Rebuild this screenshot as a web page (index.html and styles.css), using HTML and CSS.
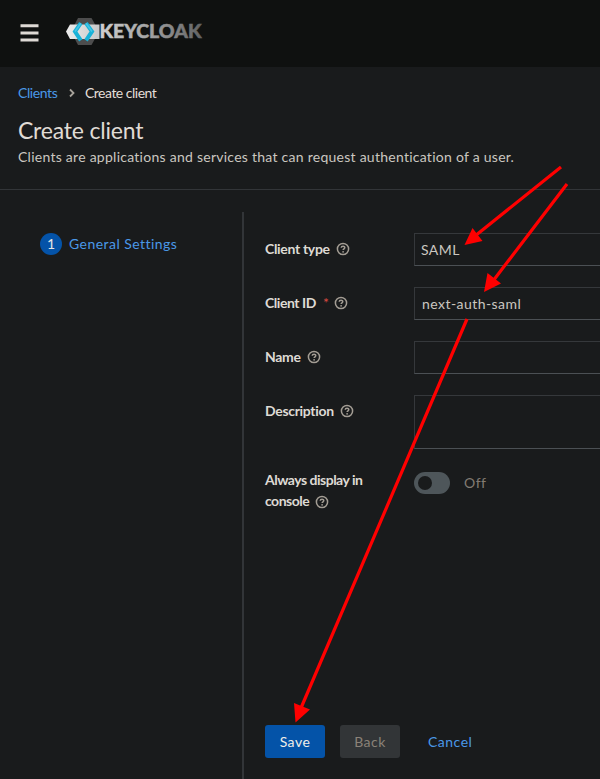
FILE: index.html
```
<!DOCTYPE html>
<html lang="en">
<head>
<meta charset="utf-8">
<title>Create client</title>
<link rel="stylesheet" href="styles.css">
</head>
<body>
<svg class="defs" width="0" height="0" aria-hidden="true">
  <symbol id="help" viewBox="0 0 14 14">
    <circle cx="7" cy="7" r="5.6" fill="none" stroke="currentColor" stroke-width="1.5"/>
    <path d="M5.200 5.700c.1-2 3.700-1.900 3.600-.1C8.800 6.800 7.100 6.800 7.100 8.100" fill="none" stroke="currentColor" stroke-width="1.500"/>
    <circle cx="7.100" cy="9.800" r=".9" fill="currentColor"/>
  </symbol>
</svg>
<header class="masthead">
  <svg class="menu" width="19" height="19" viewBox="0 0 19 19"><path d="M.5 1.800h18M.5 9h18M.5 16h18" stroke="#dedad5" stroke-width="3" stroke-linecap="butt"/></svg>
  <svg class="brand" width="140" height="30" viewBox="0 0 140 30">
    <defs>
      <linearGradient id="word" gradientUnits="userSpaceOnUse" x1="34" x2="137" y1="0" y2="0"><stop offset="0" stop-color="#d0d0d0"/><stop offset=".5" stop-color="#a0a0a0"/><stop offset="1" stop-color="#606161"/></linearGradient>
      <linearGradient id="band" x1="0" x2="1" y1="0" y2="0"><stop offset="0" stop-color="#ededed"/><stop offset="1" stop-color="#c8c8c8"/></linearGradient>
    </defs>
    <path d="M12 1h13.500L33 14.500 25.500 28H12L5 14.500z" fill="#4d4d4d"/>
    <path d="M4 7.500H33.500V22H4L0 14.500z" fill="url(#band)"/>
    <path d="M14.800 6.200 9 14.500l5.800 8.800" fill="none" stroke="#19b2d8" stroke-width="4"/>
    <path d="M20 6.200l6 8.300-6 8.800" fill="none" stroke="#19b2d8" stroke-width="4"/>
    <path d="M14.800 6.200 9 14.500M20 6.200l6 8.300" fill="none" stroke="#46c6e5" stroke-width="1.600"/>
    <text class="wordmark" x="33.500" y="21.300" textLength="102" lengthAdjust="spacingAndGlyphs" fill="url(#word)" stroke="url(#word)" stroke-width=".5">KEYCLOAK</text>
  </svg>
</header>
<section class="page-head">
  <nav class="crumbs"><a class="crumb-link">Clients</a><svg width="6" height="10" viewBox="0 0 6 10"><path d="m1 1.500 3.500 3.500L1 8.500" fill="none" stroke="#a8a39b" stroke-width="1.800"/></svg><span class="crumb-here">Create client</span></nav>
  <h1>Create client</h1>
  <p class="lead">Clients are applications and services that can request authentication of a user.</p>
</section>
<main class="wizard">
  <nav class="steps"><span class="step-num">1</span><a class="step-name">General Settings</a></nav>
  <form class="panel">
    <div class="row"><label>Client type</label><svg class="help"><use href="#help"/></svg><div class="field saml">SAML</div></div>
    <div class="row"><label class="cid">Client ID</label><span class="req">*</span><svg class="help help-req"><use href="#help"/></svg><div class="field">next-auth-saml</div></div>
    <div class="row"><label>Name</label><svg class="help"><use href="#help"/></svg><div class="field"></div></div>
    <div class="row"><label>Description</label><svg class="help"><use href="#help"/></svg><div class="field area"></div></div>
    <div class="row toggle-row"><label class="always">Always display in<br>console<svg class="help"><use href="#help"/></svg></label><span class="switch"></span><span class="off">Off</span></div>
    <footer class="actions"><span class="btn save">Save</span><span class="btn back">Back</span><span class="cancel">Cancel</span></footer>
  </form>
</main>
<svg class="arrows" width="600" height="779" viewBox="0 0 600 779">
  <g stroke="#f00" stroke-width="3.200"><path d="M561 167 475 236M567 184 493 281M467 319 301 708"/></g>
  <g fill="#f00"><path d="m464.500 245 8-17 10 13zM484 292l3.500-19 13.500 10.500zM295.500 722.500l-1.500-19.500 16 6.500z"/></g>
</svg>
</body>
</html>
```

FILE: styles.css
```
* { box-sizing: border-box; }
body { margin: 0; width: 600px; height: 779px; overflow: hidden; position: relative; background: #191b1c; color: #cbc7c0; font: 14px/21px Lato, sans-serif; }
.defs { position: absolute; }
.masthead { height: 67px; background: #0f1110; display: flex; align-items: flex-start; }
.menu { margin: 24px 0 0 20px; }
.brand { margin: 17px 0 0 27px; }
.wordmark { font: 900 18.5px Lato, sans-serif; }
.page-head { height: 123px; padding: 15px 18px 0; border-bottom: 1px solid #323538; }
.crumbs { display: flex; align-items: center; height: 21px; }
.crumbs svg { margin: 0 10px 0 11px; }
.crumb-link { width: 40px; letter-spacing: -.4px; }
.crumb-here { color: #e3dfd8; letter-spacing: -.5px; }
.crumb-link, .step-name, .cancel { color: #4a98e8; }
h1 { margin: 12px 0 0; font-size: 23px; line-height: 30px; font-weight: 400; color: #e0dcd5; letter-spacing: -.2px; }
.lead { margin: 1px 0 0; line-height: 21px; letter-spacing: .26px; white-space: nowrap; }
.wizard { display: flex; height: 589px; }
.steps { width: 242px; display: flex; align-items: flex-start; padding: 43px 0 0 40px; }
.step-num { width: 22px; height: 22px; border-radius: 50%; background: #0453a8; color: #e6e6e6; text-align: center; margin-right: 7px; }
.step-name { letter-spacing: .45px; line-height: 22px; }
.panel { width: 358px; margin-top: 22px; border-left: 2px solid #323538; padding: 21px 0 0 21px; display: flex; flex-direction: column; }
.row { display: flex; align-items: flex-start; height: 54px; }
label { font-weight: 700; color: #dedad4; margin-top: 5px; white-space: nowrap; letter-spacing: -.32px; }
.cid { letter-spacing: -.45px; }
.help { width: 14px; height: 14px; color: #a39d94; margin: 9px 0 0 6px; flex: none; }
.help-req { margin-left: 5px; }
.req { color: #d64a40; margin: 5px 0 0 7px; width: 6px; }
.field { width: 186px; height: 33px; margin-left: auto; border: 1px solid #35383b; border-bottom-color: #4b5054; border-right: 0; padding: 5px 7px; letter-spacing: .45px; flex: none; }
.saml { padding-left: 6px; }
.area { height: 54px; }
.toggle-row { margin-top: 15px; height: 50px; }
.always { width: 149px; flex: none; letter-spacing: -.5px; }
.always .help { margin: 0 0 0 6px; vertical-align: -3px; }
.switch { width: 36px; height: 22px; border-radius: 11px; background: #4e565a; margin-top: 8px; padding: 4px; flex: none; }
.switch::before { content: ""; display: block; width: 14px; height: 14px; border-radius: 50%; background: #191b1c; }
.off { color: #827b73; margin: 8px 0 0 14px; letter-spacing: .5px; }
.actions { display: flex; margin-top: auto; margin-bottom: 20px; }
.btn { width: 60px; height: 33px; line-height: 34px; text-align: center; border-radius: 3px; margin-right: 15px; letter-spacing: .5px; }
.save { background: #0453a8; color: #f0eee9; }
.back { background: #323537; color: #8a8278; }
.cancel { line-height: 34px; margin-left: 13px; letter-spacing: .5px; }
.arrows { position: absolute; left: 0; top: 0; }
```
